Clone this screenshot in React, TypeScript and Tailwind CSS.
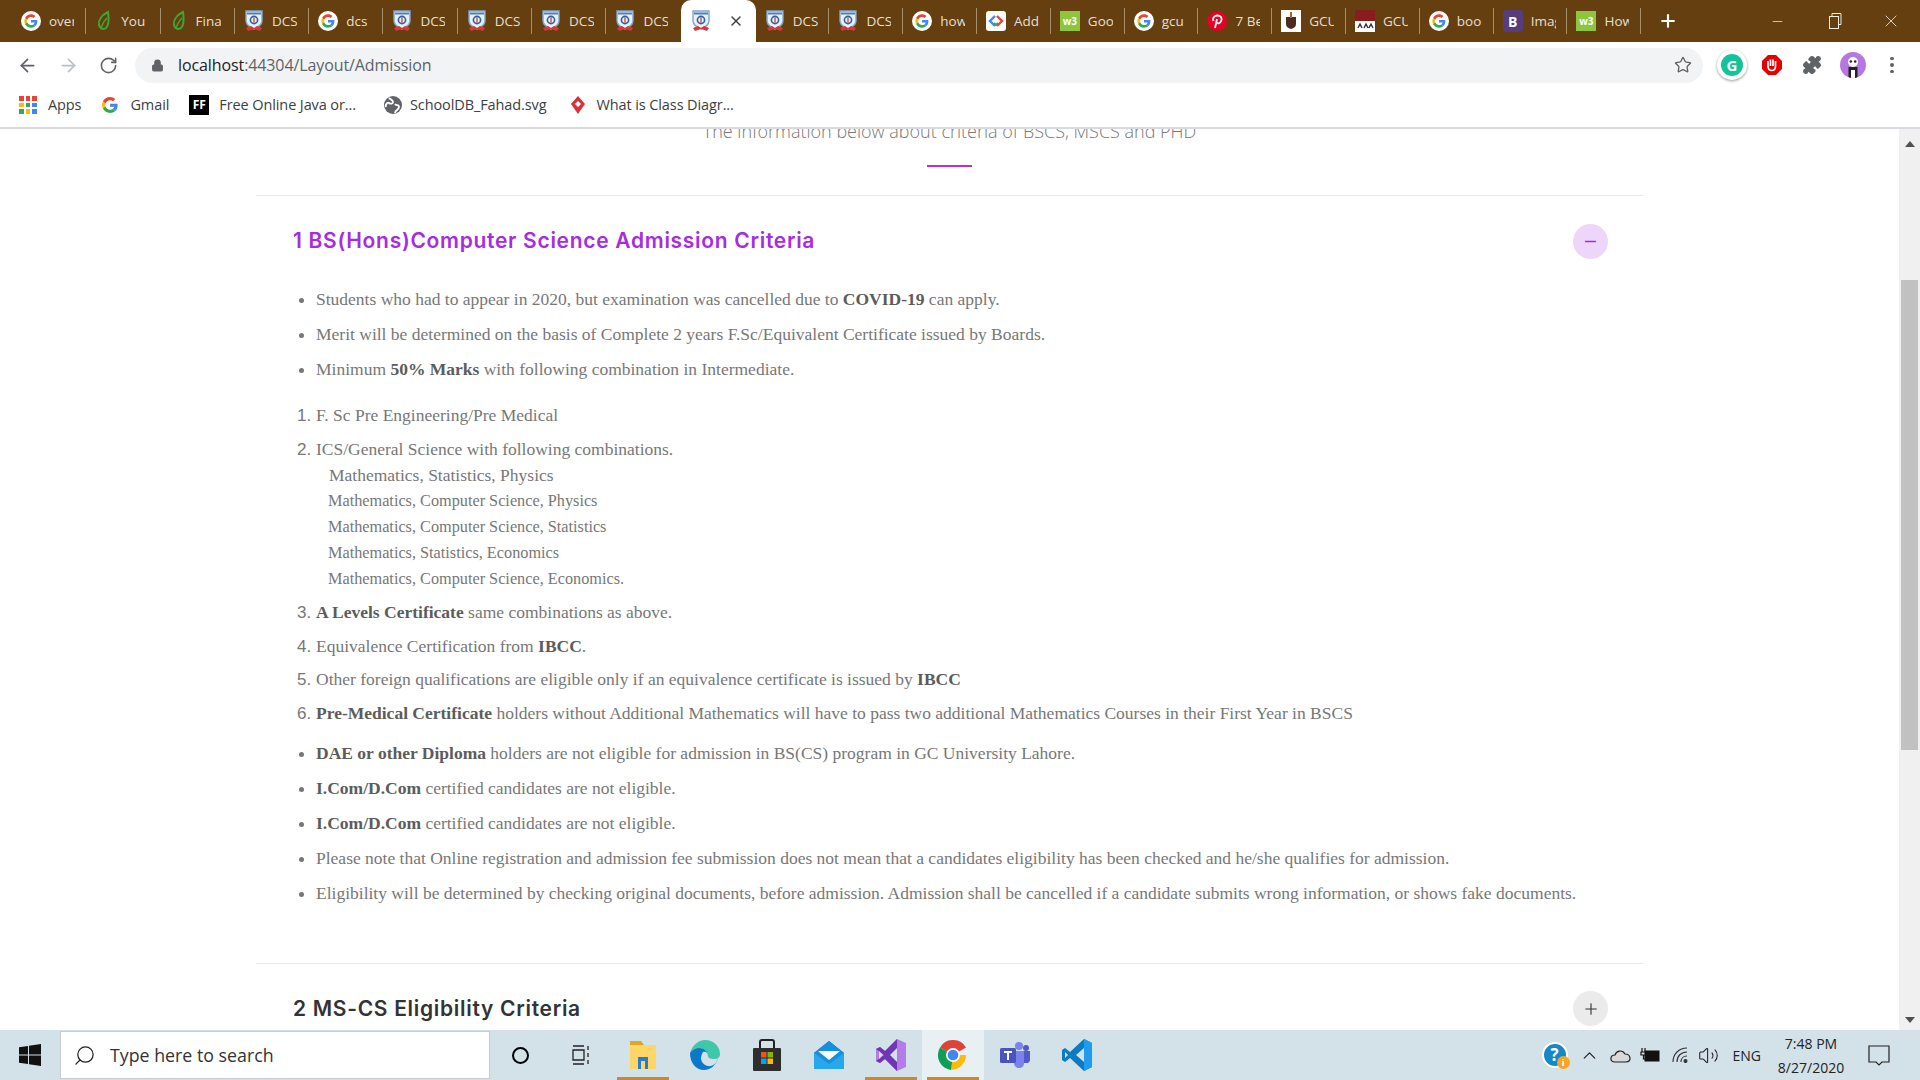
import React from 'react';
import {
  ArrowLeft,
  ArrowRight,
  ChevronUp,
  Lock,
  Minus,
  Plus,
  Puzzle,
  RotateCw,
  Search,
  Star,
  Volume2,
  X,
} from 'lucide-react';

function GoogleG({ size = 20, ring = true }: { size?: number; ring?: boolean }) {
  return (
    <svg width={size} height={size} viewBox="0 0 48 48" className="shrink-0">
      {ring && <circle cx="24" cy="24" r="24" fill="#fff" />}
      <g transform={ring ? 'translate(8 8) scale(0.667)' : undefined}>
        <path fill="#EA4335" d="M24 9.5c3.5 0 6.7 1.3 9.1 3.5l6.8-6.8C35.8 2.4 30.2 0 24 0 14.6 0 6.5 5.4 2.6 13.2l7.9 6.1C12.4 13.6 17.7 9.5 24 9.5z" />
        <path fill="#4285F4" d="M46.9 24.5c0-1.6-.1-3.1-.4-4.5H24v9h12.9c-.6 3-2.2 5.5-4.7 7.2l7.7 6c4.5-4.2 7-10.3 7-17.7z" />
        <path fill="#FBBC05" d="M10.5 28.7c-.5-1.4-.8-3-.8-4.7s.3-3.2.8-4.7l-7.9-6.1C.9 16.5 0 20.1 0 24s.9 7.5 2.6 10.8l7.9-6.1z" />
        <path fill="#34A853" d="M24 48c6.5 0 11.9-2.1 15.9-5.8l-7.7-6c-2.1 1.4-4.9 2.3-8.2 2.3-6.3 0-11.6-4.2-13.5-9.9l-7.9 6.1C6.5 42.6 14.6 48 24 48z" />
      </g>
    </svg>
  );
}

function Shield() {
  return (
    <svg width="20" height="22" viewBox="0 0 20 22" className="shrink-0">
      <path d="M2 1h16v10c0 4-4 6-8 8-4-2-8-4-8-8z" fill="#e8f0f8" stroke="#7fa6cf" strokeWidth="1.4" />
      <path d="M3 3.500h14" stroke="#4f80b8" strokeWidth="2" />
      <circle cx="10" cy="10" r="3.600" fill="none" stroke="#2f5fa5" strokeWidth="1.600" />
      <path d="M10 7.500v5" stroke="#c9302c" strokeWidth="1.200" />
      <path d="M2 18l5-2 3 2 3-2 5 2-2 3-6-2-6 2z" fill="#d43a3a" />
    </svg>
  );
}

function Leaf() {
  return (
    <svg width="18" height="22" viewBox="0 0 18 22" className="shrink-0">
      <path d="M13 2C7 5 3 10 4 15c.6 3.500 4.500 5 7 3 3-2.500 3-9 2-16z" fill="none" stroke="#3fa535" strokeWidth="2" />
      <path d="M6 19c1-5 3-8 6-11" fill="none" stroke="#3fa535" strokeWidth="1.400" />
    </svg>
  );
}

function W3() {
  return (
    <div className="flex h-5 w-5 shrink-0 items-center justify-center bg-[#8cc63f] text-[10px] leading-none font-bold text-white">
      w3
    </div>
  );
}

function Favicon({ kind }: { kind: string }) {
  if (kind === 'g') return <GoogleG />;
  if (kind === 'shield') return <Shield />;
  if (kind === 'leaf') return <Leaf />;
  if (kind === 'w3') return <W3 />;
  if (kind === 'adc') {
    return (
      <svg width="20" height="20" viewBox="0 0 20 20" className="shrink-0">
        <rect width="20" height="20" rx="3" fill="#fff" />
        <path d="M9 5l-5 5 5 5" fill="none" stroke="#4285f4" strokeWidth="2.400" />
        <path d="M11 5l5 5-5 5" fill="none" stroke="#ea4335" strokeWidth="2.400" />
        <path d="M8 12l2 2 2-2" fill="none" stroke="#34a853" strokeWidth="2" />
      </svg>
    );
  }
  if (kind === 'pin') {
    return (
      <svg width="20" height="20" viewBox="0 0 20 20" className="shrink-0">
        <circle cx="10" cy="10" r="10" fill="#e60023" />
        <path d="M8 17l2-9M6.500 10c-1.500-3 1-5.500 4-5.500s4.500 2 4 4.500-3 4.500-5 2.500" fill="none" stroke="#fff" strokeWidth="1.800" />
      </svg>
    );
  }
  if (kind === 'gcu') {
    return (
      <svg width="20" height="22" viewBox="0 0 20 22" className="shrink-0">
        <rect width="20" height="22" fill="#fff" />
        <path d="M5 7h10v7c0 3-2 4-5 5-3-1-5-2-5-5z" fill="#4b2c20" />
        <path d="M10 2v6" stroke="#b5651d" strokeWidth="2" />
      </svg>
    );
  }
  if (kind === 'ravi') {
    return (
      <svg width="20" height="22" viewBox="0 0 20 22" className="shrink-0">
        <rect width="20" height="22" fill="#fff" />
        <rect width="20" height="11" fill="#8a1c1c" />
        <path d="M3 18l2-4 2 4M9 18l2-4 2 4M14 18l2-4 2 4" fill="none" stroke="#333" strokeWidth="1.400" />
      </svg>
    );
  }
  return (
    <div className="flex h-[22px] w-5 shrink-0 items-center justify-center rounded-[3px] bg-[#563d7c] text-[14px] font-bold text-white">
      B
    </div>
  );
}

const tabs = [
  { icon: 'g', label: 'overflow' },
  { icon: 'leaf', label: 'Your' },
  { icon: 'leaf', label: 'Final' },
  { icon: 'shield', label: 'DCS' },
  { icon: 'g', label: 'dcs' },
  { icon: 'shield', label: 'DCS' },
  { icon: 'shield', label: 'DCS' },
  { icon: 'shield', label: 'DCS' },
  { icon: 'shield', label: 'DCS' },
  { icon: 'shield', label: '', active: true },
  { icon: 'shield', label: 'DCS' },
  { icon: 'shield', label: 'DCS' },
  { icon: 'g', label: 'how' },
  { icon: 'adc', label: 'Add' },
  { icon: 'w3', label: 'Goo' },
  { icon: 'g', label: 'gcu' },
  { icon: 'pin', label: '7 Best' },
  { icon: 'gcu', label: 'GCU' },
  { icon: 'ravi', label: 'GCU' },
  { icon: 'g', label: 'boo' },
  { icon: 'b', label: 'Image' },
  { icon: 'w3', label: 'How' },
];

function TabStrip() {
  return (
    <div className="flex h-[42px] shrink-0 items-stretch bg-[#653f10] pl-[12px] font-['Open_Sans',sans-serif]">
      {tabs.map((tab, i) =>
        tab.active ? (
          <div key={i} className="relative flex w-[75px] shrink-0 items-center gap-[17px] rounded-t-[10px] bg-white pl-[10px]">
            <Favicon kind={tab.icon} />
            <X size={16} strokeWidth={2.2} className="text-[#3c4043]" />
          </div>
        ) : (
          <div
            key={i}
            className={
              'my-[8px] flex shrink-0 items-center gap-[8px] overflow-hidden pl-[9px] ' +
              (i < 9 ? 'w-[74.3px] ' : 'w-[73.8px] ') +
              (tabs[i + 1]?.active ? '' : 'border-r border-[#a88f6c]')
            }
          >
            <Favicon kind={tab.icon} />
            <span className="w-[25px] overflow-hidden text-[13.5px] whitespace-nowrap text-[#e6dfd4]">{tab.label}</span>
          </div>
        ),
      )}
      <div className="ml-[17px] flex items-center">
        <Plus size={20} strokeWidth={2.6} className="text-white" />
      </div>
      <div className="ml-auto flex items-center text-[#f1ece4]">
        <div className="mr-[2px] flex w-[55px] justify-center"><Minus size={15} strokeWidth={1.2} /></div>
        <div className="flex w-[55px] justify-center">
          <svg width="14" height="16" viewBox="0 0 14 16" fill="none" stroke="currentColor" strokeWidth="1">
            <rect x="1.500" y="3.500" width="9" height="12" />
            <path d="M4 3V.5h9v11h-2.500" />
          </svg>
        </div>
        <div className="flex w-[58px] justify-center"><X size={20} strokeWidth={1} /></div>
      </div>
    </div>
  );
}

function Toolbar() {
  return (
    <div className="flex h-[46px] shrink-0 items-center bg-white pl-[17px] font-['Open_Sans',sans-serif]">
      <ArrowLeft size={21} strokeWidth={2} className="text-[#5f6368]" />
      <ArrowRight size={21} strokeWidth={2} className="ml-[20px] text-[#bcc0c4]" />
      <RotateCw size={19} strokeWidth={2} className="ml-[20px] text-[#5f6368]" />
      <div className="ml-[17px] flex h-[35px] w-[1568px] items-center rounded-full bg-[#f1f3f4] pl-[16px]">
        <Lock size={13} fill="#5f6368" strokeWidth={2} className="text-[#5f6368]" />
        <span className="ml-[14px] text-[16px] tracking-[-0.1px] text-[#202124]">
          localhost<span className="text-[#5f6368]">:44304/Layout/Admission</span>
        </span>
        <Star size={18} strokeWidth={1.8} className="ml-auto mr-[11px] text-[#5f6368]" />
      </div>
      <div className="ml-[14px] flex h-[30px] w-[30px] items-center justify-center rounded-full bg-white shadow-[0_1px_3px_rgba(0,0,0,0.4)]">
        <div className="flex h-[22px] w-[22px] items-center justify-center rounded-full bg-[#15c39a] text-[15px] font-bold text-white">G</div>
      </div>
      <svg width="22" height="22" viewBox="0 0 22 22" className="ml-[14px]">
        <path d="M7 1h8l6 6v8l-6 6H7l-6-6V7z" fill="#e60000" />
        <path d="M7 13V7m2.500 5V5.500m2.500 6.500V5.500M14.500 12V7M7 12c0 3 2 4.500 4 4.500s3.500-1.500 3.500-4.500" fill="none" stroke="#fff" strokeWidth="1.700" />
      </svg>
      <Puzzle size={20} fill="#5f6368" strokeWidth={1.5} className="ml-[19px] text-[#5f6368]" />
      <div className="ml-[18px] flex h-[26px] w-[26px] items-end justify-center overflow-hidden rounded-full bg-[#b678e0]">
        <svg width="14" height="22" viewBox="0 0 14 22">
          <circle cx="7" cy="6" r="5" fill="#fff" />
          <circle cx="4.800" cy="5.500" r="1.300" fill="#222" />
          <circle cx="9.200" cy="5.500" r="1.300" fill="#222" />
          <rect x="2.500" y="11" width="9" height="11" fill="#222" />
          <rect x="5" y="14" width="4" height="8" fill="#fff" />
        </svg>
      </div>
      <div className="ml-[24px] flex flex-col gap-[3px]">
        <span className="h-[3.500px] w-[3.500px] rounded-full bg-[#5f6368]" />
        <span className="h-[3.500px] w-[3.500px] rounded-full bg-[#5f6368]" />
        <span className="h-[3.500px] w-[3.500px] rounded-full bg-[#5f6368]" />
      </div>
    </div>
  );
}

function Bookmarks() {
  return (
    <div className="flex h-[39px] shrink-0 items-center bg-white pb-[5px] pl-[19px] font-['Open_Sans',sans-serif] text-[14.5px] tracking-[-0.1px] text-[#3c4043]">
      <div className="grid h-[18px] w-[18px] grid-cols-3 gap-[2px]">
        {['#ea4335', '#ea4335', '#ea4335', '#fbbc05', '#34a853', '#4285f4', '#34a853', '#fbbc05', '#4285f4'].map((c, i) => (
          <span key={i} style={{ backgroundColor: c }} />
        ))}
      </div>
      <span className="ml-[11px]">Apps</span>
      <div className="ml-[21px]"><GoogleG size={16} ring={false} /></div>
      <span className="ml-[12px]">Gmail</span>
      <div className="ml-[20px] flex h-5 w-5 items-center justify-center bg-black text-[12px] leading-none font-bold text-white">FF</div>
      <span className="ml-[10px]">Free Online Java or...</span>
      <svg width="20" height="20" viewBox="0 0 20 20" className="ml-[27px]">
        <circle cx="10" cy="10" r="9" fill="#5f6368" />
        <path d="M6 3c2 2 4 2 4 4S7 9 6 8 2 9 3 12M12 18c0-3 4-3 4-6s-3-1-4-3" fill="none" stroke="#fff" strokeWidth="1.800" />
      </svg>
      <span className="ml-[7px]">SchoolDB_Fahad.svg</span>
      <svg width="18" height="20" viewBox="0 0 18 20" className="ml-[23px]">
        <path d="M9 1l7 8-7 10-7-10z" fill="#d6333a" />
        <path d="M6 9l3-3 3 3-3 3z" fill="#fff" />
      </svg>
      <span className="ml-[9px]">What is Class Diagr...</span>
    </div>
  );
}

function Scrollbar() {
  return (
    <div className="flex w-[21px] shrink-0 flex-col items-center bg-[#f0f0f0]">
      <div className="mt-[12px] h-0 w-0 border-x-[5px] border-b-[6px] border-x-transparent border-b-[#505050]" />
      <div className="mt-[133px] h-[470px] w-[17px] bg-[#c1c1c1]" />
      <div className="mt-auto mb-[7px] h-0 w-0 border-x-[5px] border-t-[6px] border-x-transparent border-t-[#505050]" />
    </div>
  );
}

const firstBullets = [
  <>Students who had to appear in 2020, but examination was cancelled due to <b>COVID-19</b> can apply.</>,
  <>Merit will be determined on the basis of Complete 2 years F.Sc/Equivalent Certificate issued by Boards.</>,
  <>Minimum <b>50% Marks</b> with following combination in Intermediate.</>,
];

const lastBullets = [
  <><b>DAE or other Diploma</b> holders are not eligible for admission in BS(CS) program in GC University Lahore.</>,
  <><b>I.Com/D.Com</b> certified candidates are not eligible.</>,
  <><b>I.Com/D.Com</b> certified candidates are not eligible.</>,
  <>Please note that Online registration and admission fee submission does not mean that a candidates eligibility has been checked and he/she qualifies for admission.</>,
  <>Eligibility will be determined by checking original documents, before admission. Admission shall be cancelled if a candidate submits wrong information, or shows fake documents.</>,
];

const combos = [
  'Mathematics, Computer Science, Physics',
  'Mathematics, Computer Science, Statistics',
  'Mathematics, Statistics, Economics',
  'Mathematics, Computer Science, Economics.',
];

function BulletList({ items, className }: { items: React.ReactNode[]; className: string }) {
  return (
    <ul className={'list-disc pl-[60px] ' + className}>
      {items.map((item, i) => (
        <li key={i} className="h-[35px] font-['Liberation_Serif',serif] text-[17.5px] leading-[35px] whitespace-nowrap text-[#777] marker:text-[#777] [&_b]:text-[#5c5c5c]">
          {item}
        </li>
      ))}
    </ul>
  );
}

function Numbered({ children }: { children: React.ReactNode }) {
  return (
    <li className="font-['Liberation_Sans',sans-serif] text-[17px] leading-[26px] text-[#777]">
      <div className="font-['Liberation_Serif',serif] text-[17.5px] whitespace-nowrap [&_b]:text-[#5c5c5c]">{children}</div>
    </li>
  );
}

function Content() {
  return (
    <div className="min-w-0 flex-1 overflow-hidden">
      <p className="-mt-[11px] h-[27px] text-center font-['Open_Sans',sans-serif] text-[18px] leading-[27px] font-light text-[#777]">
        The information below about criteria of BSCS, MSCS and PHD
      </p>
      <div className="mx-auto mt-[20px] h-[2px] w-[45px] bg-[#c030c8]" />
      <div className="mx-[256px] mt-[28px] border-t border-[#e8e8e8] pb-[52px]">
        <div className="flex h-[90px] items-center justify-between pr-[35px] pl-[37px]">
          <h2 className="font-['Inter',sans-serif] text-[21px] font-semibold tracking-[0.7px] text-[#a82be2]">
            1 BS(Hons)Computer Science Admission Criteria
          </h2>
          <button className="flex h-[35px] w-[35px] items-center justify-center rounded-full bg-[#eed6fa]">
            <Minus size={17} strokeWidth={2} className="text-[#a82be2]" />
          </button>
        </div>
        <BulletList items={firstBullets} className="-mt-[4px]" />
        <ol className="mt-[15px] list-decimal space-y-[7.5px] pl-[60px]">
          <Numbered>F. Sc Pre Engineering/Pre Medical</Numbered>
          <Numbered>
            ICS/General Science with following combinations.
            <span className="block pl-[13px] text-[17.5px]">Mathematics, Statistics, Physics</span>
            {combos.map((c) => (
              <span key={c} className="block pl-[12px] text-[16.25px]">{c}</span>
            ))}
          </Numbered>
          <Numbered><b>A Levels Certificate</b> same combinations as above.</Numbered>
          <Numbered>Equivalence Certification from <b>IBCC</b>.</Numbered>
          <Numbered>Other foreign qualifications are eligible only if an equivalence certificate is issued by <b>IBCC</b></Numbered>
          <Numbered><b>Pre-Medical Certificate</b> holders without Additional Mathematics will have to pass two additional Mathematics Courses in their First Year in BSCS</Numbered>
        </ol>
        <BulletList items={lastBullets} className="mt-[10px]" />
      </div>
      <div className="mx-[256px] border-t border-[#e8e8e8]">
        <div className="flex h-[90px] items-center justify-between pr-[35px] pl-[37px]">
          <h2 className="font-['Inter',sans-serif] text-[21px] font-semibold tracking-[0.7px] text-[#333]">2 MS-CS Eligibility Criteria</h2>
          <button className="flex h-[35px] w-[35px] items-center justify-center rounded-full bg-[#ebebeb]">
            <Plus size={18} strokeWidth={1.5} className="text-[#333]" />
          </button>
        </div>
      </div>
    </div>
  );
}

function TaskIcon({ children, active, running }: { children: React.ReactNode; active?: boolean; running?: boolean }) {
  return (
    <div className={'relative flex h-full w-[62px] shrink-0 items-center justify-center ' + (active ? 'bg-[#e8f0f3]' : '')}>
      {children}
      {running && <span className="absolute bottom-0 left-[5px] h-[3px] w-[52px] bg-[#c98a2e]" />}
    </div>
  );
}

function Taskbar() {
  return (
    <div className="flex h-[50px] shrink-0 items-center bg-[#d3e1e9] font-['Open_Sans',sans-serif]">
      <div className="flex w-[60px] justify-center">
        <svg width="22" height="22" viewBox="0 0 22 22" fill="#111">
          <path d="M0 3.200L9 2v8.400H0zM10 1.800L22 0v10.400H10zM0 11.600h9V20L0 18.800zM10 11.600h12V22l-12-1.800z" />
        </svg>
      </div>
      <div className="flex h-[48px] w-[430px] items-center border border-[#c8ccd0] bg-white pl-[12px] text-[17.8px] text-[#333]">
        <Search size={23} strokeWidth={1.3} className="-scale-x-100 text-[#222]" />
        <span className="ml-[14px]">Type here to search</span>
      </div>
      <div className="flex h-full w-[61px] items-center justify-center">
        <span className="h-[17px] w-[17px] rounded-full border-[2.500px] border-black" />
      </div>
      <div className="flex h-full w-[61px] items-center justify-center">
        <svg width="20" height="20" viewBox="0 0 20 20" fill="none" stroke="#222" strokeWidth="1.300">
          <path d="M1 1h11M1 19h11M1 5h11v10H1zM16 1v4M16 8v4M16 15v4" />
        </svg>
      </div>
      <TaskIcon running>
        <svg width="28" height="30" viewBox="0 0 28 30">
          <path d="M1 1h11l3 4h-14z" fill="#e0a526" />
          <rect x="1" y="5" width="26" height="24" fill="#fcd768" />
          <path d="M9 29V17h10v12h-3v-8h-4v8z" fill="#2a7bc8" />
        </svg>
      </TaskIcon>
      <TaskIcon>
        <svg width="30" height="30" viewBox="0 0 30 30">
          <path d="M15 0c8 0 15 6 15 14 0 3-2 5-6 5-3 0-6-1-6-3 0-5-4-8-9-8-4 0-7 2-9 5C2 6 8 0 15 0z" fill="#3fc8a8" />
          <path d="M0 13c2-3 5-5 9-5 5 0 9 3 9 8 0 2 3 3 6 3 2 0 3-.5 4-1-2 7-7 12-14 12C6 30 0 23 0 13z" fill="#0c78c8" />
          <path d="M11 18c0 5 5 9 10 8 3-1 5-2 7-8-1 .5-2 1-4 1-3 0-6-1-6-3 0-3-2-5-5-4-1 2-2 4-2 6z" fill="#d3e1e9" />
        </svg>
      </TaskIcon>
      <TaskIcon>
        <svg width="30" height="32" viewBox="0 0 30 32">
          <path d="M8 9V3c0-1 1-2 2-2h10c1 0 2 1 2 2v6" fill="none" stroke="#222" strokeWidth="2" />
          <rect x="1" y="9" width="28" height="23" rx="1" fill="#2e2e2e" />
          <rect x="9" y="13" width="5.500" height="5.500" fill="#f25022" />
          <rect x="15.500" y="13" width="5.500" height="5.500" fill="#7fba00" />
          <rect x="9" y="19.500" width="5.500" height="5.500" fill="#00a4ef" />
          <rect x="15.500" y="19.500" width="5.500" height="5.500" fill="#ffb900" />
        </svg>
      </TaskIcon>
      <TaskIcon>
        <svg width="30" height="30" viewBox="0 0 30 30">
          <path d="M15 1l15 12v16H0V13z" fill="#0a6fc2" />
          <path d="M0 13h30v16H0z" fill="#28a8ea" />
          <path d="M0 13l15 11 15-11-15-12z" fill="#1490df" />
          <path d="M4 11h22l-11 9z" fill="#fff" />
        </svg>
      </TaskIcon>
      <TaskIcon running>
        <svg width="30" height="32" viewBox="0 0 30 32">
          <path d="M21 0l9 4v24l-9 4-12-12-5 4-4-2V10l4-2 5 4z" fill="#b57be8" />
          <path d="M21 0v32L9 20l-5 4-4-2 8-6-8-6 4-2 5 4z" fill="#6f35b5" />
          <path d="M21 9l-7 7 7 7z" fill="#d3e1e9" />
          <path d="M3 12l4 4-4 4z" fill="#d3e1e9" />
        </svg>
      </TaskIcon>
      <TaskIcon active running>
        <svg width="30" height="30" viewBox="0 0 30 30">
          <path d="M15 15L2 7.500A15 15 0 0 1 28 7.500z" fill="#db4437" />
          <path d="M15 15h13A15 15 0 0 1 13 30z" fill="#fbbc05" />
          <path d="M15 15L13 30A15 15 0 0 1 2 7.500z" fill="#0f9d58" />
          <circle cx="15" cy="15" r="7" fill="#fff" />
          <circle cx="15" cy="15" r="5.300" fill="#4285f4" />
        </svg>
      </TaskIcon>
      <TaskIcon>
        <svg width="30" height="28" viewBox="0 0 30 28">
          <circle cx="19" cy="5" r="4" fill="#7b83eb" />
          <circle cx="26" cy="7" r="3" fill="#5059c9" />
          <path d="M14 10h10v12c0 3-2 5-5 5s-5-2-5-5z" fill="#7b83eb" />
          <path d="M24 10h6v9c0 2-2 3-3 3h-3z" fill="#5059c9" />
          <rect x="0" y="7" width="16" height="15" rx="1.500" fill="#4b53bc" />
          <path d="M4 11h8M8 11v8" stroke="#fff" strokeWidth="2" />
        </svg>
      </TaskIcon>
      <TaskIcon>
        <svg width="30" height="32" viewBox="0 0 30 32">
          <path d="M22 0l8 4v24l-8 4L8 19l-5 4-3-2V11l3-2 5 4z" fill="#0a7cc4" />
          <path d="M22 0l8 4v24l-8 4z" fill="#1f9cf0" />
          <path d="M22 9l-8 7 8 7z" fill="#d3e1e9" />
          <path d="M3 13l3 3-3 3z" fill="#d3e1e9" />
        </svg>
      </TaskIcon>
      <div className="ml-auto flex h-full items-center text-[#222]">
        <div className="relative flex h-[26px] w-[26px] items-center justify-center rounded-full border-[2px] border-white bg-[#1488c8] text-[17px] font-bold text-white">
          ?
          <span className="absolute -right-[4px] -bottom-[3px] flex h-[13px] w-[13px] items-center justify-center rounded-full bg-[#f5a623] text-[9px]">i</span>
        </div>
        <ChevronUp size={21} strokeWidth={1.4} className="ml-[11px]" />
        <svg width="21" height="16" viewBox="0 0 21 16" className="ml-[10px]">
          <path d="M5 15c-6 0-5-7 0-7 1-4 7-6 10-1 6 0 7 8 1 8z" fill="#d9d9d9" stroke="#222" strokeWidth="1.200" />
        </svg>
        <svg width="20" height="16" viewBox="0 0 20 16" className="ml-[9px]">
          <rect x="5" y="4" width="14" height="10" fill="#111" stroke="#111" />
          <path d="M2 1v4M5 1v4M1 5h5v3H1zM3.500 8v4h2" fill="none" stroke="#111" strokeWidth="1.200" />
        </svg>
        <svg width="18" height="18" viewBox="0 0 18 18" fill="none" stroke="#333" strokeWidth="1.100" className="ml-[11px]">
          <path d="M2 16C2 8 8 2 16 2M6 16c0-6 4-10 10-10M10 16c0-3 2-6 6-6" />
          <circle cx="14.500" cy="15" r="1.500" fill="#333" />
        </svg>
        <Volume2 size={21} strokeWidth={1.2} className="ml-[9px]" />
        <span className="ml-[14px] text-[14px]">ENG</span>
        <div className="ml-[12px] flex w-[76px] flex-col items-center gap-[3px] text-[14px] leading-[21px]">
          <span>7:48 PM</span>
          <span>8/27/2020</span>
        </div>
        <svg width="22" height="22" viewBox="0 0 22 22" fill="none" stroke="#222" strokeWidth="1.200" className="mr-[30px] ml-[19px]">
          <path d="M1 2h20v16h-7l-3 3-3-3H1z" />
        </svg>
      </div>
    </div>
  );
}

export default function App() {
  return (
    <div className="flex h-screen w-full flex-col overflow-hidden bg-white">
      <TabStrip />
      <Toolbar />
      <Bookmarks />
      <div className="h-[2px] shrink-0 bg-[#d9d9e0]" />
      <main className="flex min-h-0 flex-1">
        <Content />
        <Scrollbar />
      </main>
      <Taskbar />
    </div>
  );
}
